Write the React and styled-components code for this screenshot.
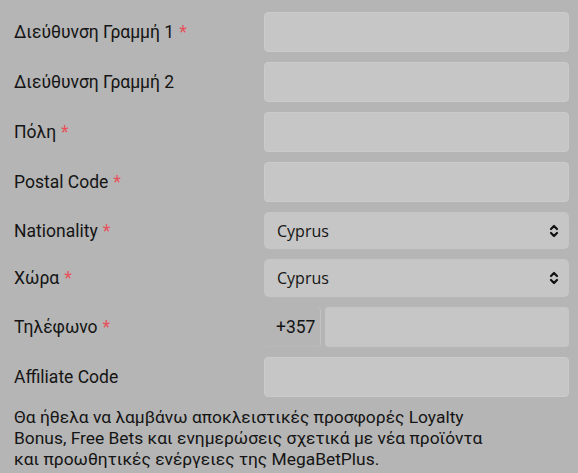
import styled, { createGlobalStyle } from 'styled-components';

const GlobalStyle = createGlobalStyle`
  html, body {
    margin: 0;
    padding: 0;
    background: #b5b5b5;
  }
  body {
    font-family: Roboto, "Liberation Sans", sans-serif;
    color: #141414;
  }
`;

const Form = styled.div`
  width: 578px;
  height: 473px;
  box-sizing: border-box;
  padding: 12px 9px 0 14px;
  background: #b5b5b5;
  overflow: hidden;
`;

const Row = styled.div`
  display: grid;
  grid-template-columns: 250px 1fr;
  align-items: center;
  margin-bottom: 10px;
`;

const Label = styled.label`
  font-size: 17.5px;
  line-height: 20px;
  color: #141414;
`;

const Star = styled.span`
  color: #e8505b;
  margin-left: 5px;
`;

const Input = styled.div`
  height: 40px;
  box-sizing: border-box;
  background: #c6c6c6;
  border: 1px solid #cbcbcb;
  border-radius: 4px;
`;

const Select = styled.div`
  height: ${(p) => p.$h}px;
  box-sizing: border-box;
  background: #c6c6c6;
  border-radius: 5px;
  display: flex;
  align-items: center;
  justify-content: space-between;
  padding: 0 10px 0 13px;
  font-family: "Open Sans", "Liberation Sans", sans-serif;
  font-size: 16px;
  color: #141414;
`;

const Phone = styled.div`
  display: flex;
  height: 40px;
  gap: 4px;
`;

const Prefix = styled.div`
  width: 57px;
  box-sizing: border-box;
  display: flex;
  align-items: center;
  padding-left: 12px;
  font-size: 17.5px;
  color: #141414;
  border-right: 1px solid #c2c2c2;
  border-bottom: 1px solid #b9b9b9;
  border-radius: 0 4px 4px 4px;
`;

const PhoneInput = styled(Input)`
  flex: 1;
  border: none;
`;

const Note = styled.p`
  margin: 0;
  font-size: 17.4px;
  line-height: 21px;
  color: #141414;
  width: 490px;
`;

const Chevrons = () => (
  <svg width="10" height="16" viewBox="0 0 10 16" fill="none" stroke="#111" strokeWidth="2.2" strokeLinecap="round" strokeLinejoin="round">
    <path d="M2 6 L5 3 L8 6" />
    <path d="M2 10 L5 13 L8 10" />
  </svg>
);

export default function App() {
  return (
    <>
      <GlobalStyle />
      <Form>
        <Row>
          <Label>Διεύθυνση Γραμμή 1<Star>*</Star></Label>
          <Input />
        </Row>
        <Row>
          <Label>Διεύθυνση Γραμμή 2</Label>
          <Input />
        </Row>
        <Row>
          <Label>Πόλη<Star>*</Star></Label>
          <Input />
        </Row>
        <Row>
          <Label>Postal Code<Star>*</Star></Label>
          <Input />
        </Row>
        <Row>
          <Label>Nationality<Star>*</Star></Label>
          <Select $h={37}>Cyprus<Chevrons /></Select>
        </Row>
        <Row>
          <Label>Χώρα<Star>*</Star></Label>
          <Select $h={38}>Cyprus<Chevrons /></Select>
        </Row>
        <Row>
          <Label>Τηλέφωνο<Star>*</Star></Label>
          <Phone>
            <Prefix>+357</Prefix>
            <PhoneInput />
          </Phone>
        </Row>
        <Row>
          <Label>Affiliate Code</Label>
          <Input />
        </Row>
        <Note>
          Θα ήθελα να λαμβάνω αποκλειστικές προσφορές Loyalty Bonus, Free Bets και ενημερώσεις σχετικά με νέα προϊόντα και προωθητικές ενέργειες της MegaBetPlus.
        </Note>
      </Form>
    </>
  );
}
